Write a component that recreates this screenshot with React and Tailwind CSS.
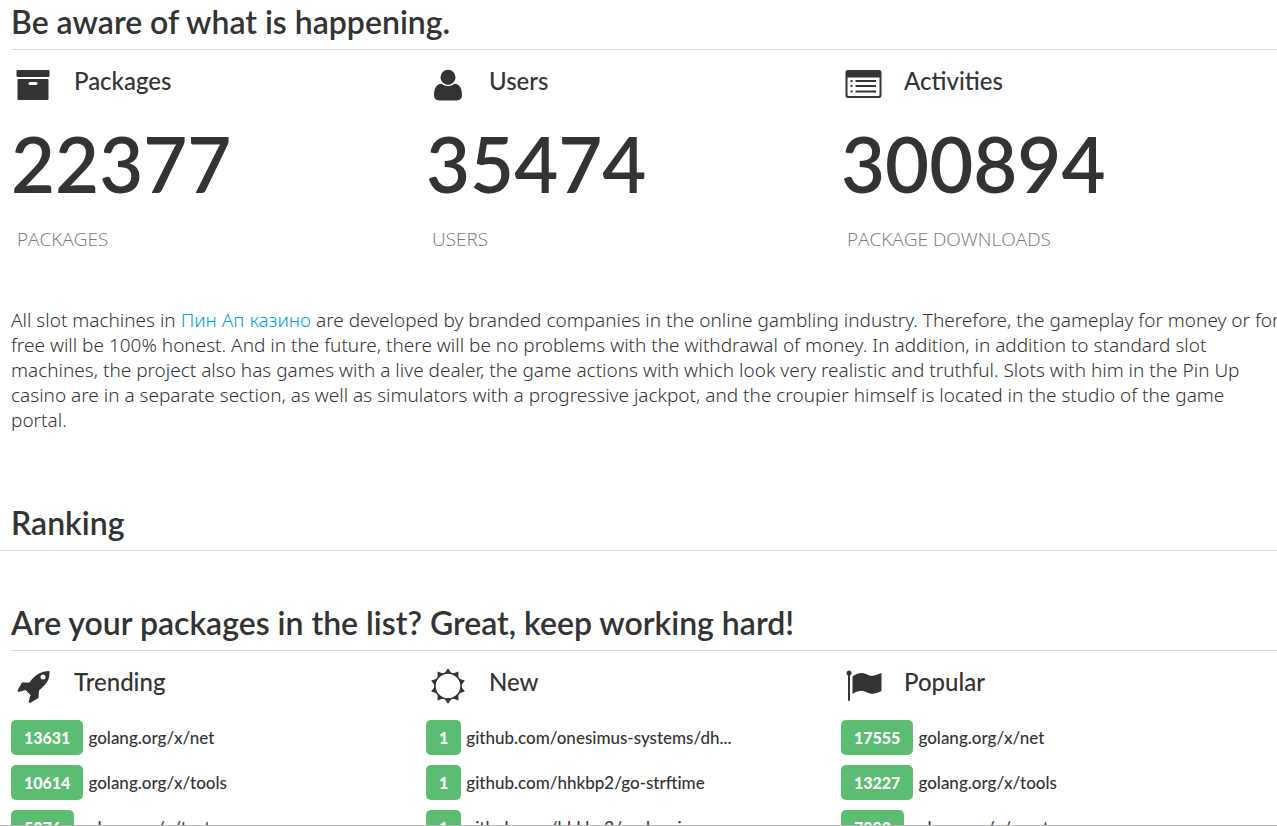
const ICON = "ml-[3px] size-10 shrink-0";

const ArchiveIcon = () => (
  <svg aria-hidden="true" viewBox="0 0 40 40" className={ICON} fill="#333">
    <rect x="2.500" y="4" width="33" height="7" rx="1" />
    <path fillRule="evenodd" d="M4.500 13h29a1 1 0 0 1 1 1v19a1 1 0 0 1-1 1H4.500a1 1 0 0 1-1-1V14a1 1 0 0 1 1-1zM16 16a1 1 0 0 0 0 3h6a1 1 0 0 0 0-3z" />
  </svg>
);

const UserIcon = () => (
  <svg aria-hidden="true" viewBox="0 0 40 40" className={ICON} fill="#333">
    <circle cx="19" cy="11.300" r="7.500" />
    <path d="M12.700 17.700C16 21 22 21 25.300 17.700C31 17.700 33 23 33 29C33 32.500 31 34.400 28 34.400H10C7 34.400 5 32.500 5 29C5 23 7 17.700 12.700 17.700Z" />
  </svg>
);

const ListIcon = () => (
  <svg aria-hidden="true" viewBox="0 0 40 40" className={ICON} fill="#333">
    <path fillRule="evenodd" d="M4 4H35Q37.500 4 37.500 7V29Q37.500 32 35 32H4Q1.500 32 1.500 29V7Q1.500 4 4 4ZM3.500 11.500V29Q3.500 30 4.500 30H34.500Q35.500 30 35.500 29V11.500Z" />
    <path d="M6.500 14h2v2h-2zM6.500 19h2v2h-2zM6.500 24.500h2v2h-2zM11.500 14h20.500v2h-20.500zM11.500 19h20.500v2h-20.500zM11.500 24.500h20.500v2h-20.500z" />
  </svg>
);

const RocketIcon = () => (
  <svg aria-hidden="true" viewBox="0 0 40 40" className={ICON} fill="#333">
    <path fillRule="evenodd" d="M35.500 4C36 12 33 17 25 23.500L24.500 31L16 36L14.500 35L16.500 28L11.500 23L4.500 25L3.500 23.500L8 15.500H15.500C21 8 26.500 4 35.500 4ZM29 7.500A2.500 2.500 0 1 0 29 12.500A2.500 2.500 0 1 0 29 7.500Z" />
  </svg>
);

const SUN_RAYS = [0, 36, 72, 108, 144, 180, 216, 252, 288, 324];

const SunIcon = () => (
  <svg aria-hidden="true" viewBox="0 0 40 40" className={ICON} fill="#333">
    <circle cx="19" cy="19" r="13.100" fill="none" stroke="#333" strokeWidth="1.500" />
    {SUN_RAYS.map((angle) => (
      <path key={angle} d="M19 1.200L23 7Q19 5.900 15 7Z" transform={`rotate(${angle} 19 19)`} />
    ))}
  </svg>
);

const FlagIcon = () => (
  <svg aria-hidden="true" viewBox="0 0 40 40" className={ICON} fill="#333">
    <circle cx="5" cy="6" r="2.500" />
    <rect x="4" y="6" width="2" height="28" rx="1" />
    <path d="M8.500 9.500C15 5 19 5.500 23 7.500C28 10 31 8.500 37.500 6V24C30.500 27.500 27 27.500 22 25C18 23 14 23.500 8.500 27Z" />
  </svg>
);

const stats = [
  { title: "Packages", value: "22377", label: "Packages", Icon: ArchiveIcon },
  { title: "Users", value: "35474", label: "Users", Icon: UserIcon },
  { title: "Activities", value: "300894", label: "Package downloads", Icon: ListIcon },
];

const rankings = [
  {
    title: "Trending",
    Icon: RocketIcon,
    rows: [["13631", "golang.org/x/net"], ["10614", "golang.org/x/tools"], ["5076", "golang.org/x/text"]],
  },
  {
    title: "New",
    Icon: SunIcon,
    rows: [["1", "github.com/onesimus-systems/dh..."], ["1", "github.com/hhkbp2/go-strftime"], ["1", "github.com/hhkbp2/go-logging"]],
  },
  {
    title: "Popular",
    Icon: FlagIcon,
    rows: [["17555", "golang.org/x/net"], ["13227", "golang.org/x/tools"], ["7882", "golang.org/x/crypto"]],
  },
];

const ColumnTitle = ({ Icon, children }) => (
  <div className="flex items-start gap-5 pt-4">
    <Icon />
    <h3 className="text-[24px] leading-[30px] font-medium">{children}</h3>
  </div>
);

export default function App() {
  return (
    <div className="h-screen overflow-hidden border-b border-[#b5b5b5] bg-white font-[Lato,sans-serif] text-[#333]">
      <section className="pl-[11px]">
        <h2 className="border-b border-[#dedede] pt-[3px] pb-2 text-[32px] leading-[38px] font-semibold">Be aware of what is happening.</h2>
        <div className="grid grid-cols-3 pr-[21px]">
          {stats.map(({ title, value, label, Icon }) => (
            <div key={title}>
              <ColumnTitle Icon={Icon}>{title}</ColumnTitle>
              <p className="pt-2 text-[76px] leading-[100px] font-semibold">{value}</p>
              <p className="px-[6px] pt-[10px] font-['Open_Sans',sans-serif] text-[19px] leading-[30px] font-light text-[#777] uppercase">{label}</p>
            </div>
          ))}
        </div>
      </section>

      <p className="-mr-10 pt-[54px] pl-[11px] font-['Noto_Sans',sans-serif] text-[19px] leading-[25px] font-[350]">
        All slot machines in <a href="#pin-up" className="text-[#009fda]">Пин Ап казино</a> are developed by branded companies in the online gambling industry. Therefore, the gameplay for money or for
        <br />
        free will be 100% honest. And in the future, there will be no problems with the withdrawal of money. In addition, in addition to standard slot
        <br />
        machines, the project also has games with a live dealer, the game actions with which look very realistic and truthful. Slots with him in the Pin Up
        <br />
        casino are in a separate section, as well as simulators with a progressive jackpot, and the croupier himself is located in the studio of the game
        <br />
        portal.
      </p>

      <h2 className="mt-[71px] border-b border-[#dedede] pb-2 pl-[11px] text-[32px] leading-[38px] font-semibold">Ranking</h2>

      <section className="pt-[53px] pl-[11px]">
        <h2 className="border-b border-[#dedede] pb-2 text-[32px] leading-[38px] font-semibold">Are your packages in the list? Great, keep working hard!</h2>
        <div className="grid grid-cols-3 pr-[21px]">
          {rankings.map(({ title, rows, Icon }) => (
            <div key={title}>
              <ColumnTitle Icon={Icon}>{title}</ColumnTitle>
              <ul className="flex flex-col gap-[10px] pt-[13px]">
                {rows.map(([count, name]) => (
                  <li key={name} className="flex items-center gap-[5px]">
                    <span className="rounded-[5px] bg-[#5bbd72] px-[13px] text-base leading-[35px] font-black text-white">{count}</span>
                    <a href={"#" + name} className="text-[17px] leading-[35px] font-medium">{name}</a>
                  </li>
                ))}
              </ul>
            </div>
          ))}
        </div>
      </section>
    </div>
  );
}
